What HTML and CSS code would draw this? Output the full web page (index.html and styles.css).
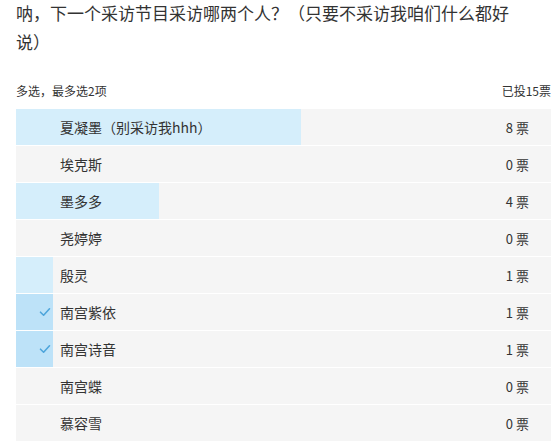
FILE: index.html
```html
<!DOCTYPE html>
<html lang="zh">
<head>
<meta charset="utf-8">
<link rel="stylesheet" href="styles.css">
</head>
<body>
<div class="poll">
  <div class="title">呐，下一个采访节目采访哪两个人？（只要不采访我咱们什么都好说）</div>
  <div class="meta">
    <span>多选，最多选2项</span>
    <span>已投15票</span>
  </div>
  <ul class="options">
    <li class="option"><span class="bar" style="width:53.33%"></span><span class="check"></span><span class="label">夏凝墨（别采访我hhh）</span><span class="count">8 票</span></li>
    <li class="option"><span class="bar" style="width:0%"></span><span class="check"></span><span class="label">埃克斯</span><span class="count">0 票</span></li>
    <li class="option"><span class="bar" style="width:26.67%"></span><span class="check"></span><span class="label">墨多多</span><span class="count">4 票</span></li>
    <li class="option"><span class="bar" style="width:0%"></span><span class="check"></span><span class="label">尧婷婷</span><span class="count">0 票</span></li>
    <li class="option"><span class="bar" style="width:7%"></span><span class="check"></span><span class="label">殷灵</span><span class="count">1 票</span></li>
    <li class="option checked"><span class="bar" style="width:7%"></span><span class="check"><svg viewBox="0 0 12 10" width="12" height="10"><path d="M1.5 5.2 L4.6 8.2 L10.5 1.8" fill="none" stroke="#4ea5db" stroke-width="1.6" stroke-linecap="round" stroke-linejoin="round"/></svg></span><span class="label">南宫紫依</span><span class="count">1 票</span></li>
    <li class="option checked"><span class="bar" style="width:7%"></span><span class="check"><svg viewBox="0 0 12 10" width="12" height="10"><path d="M1.5 5.2 L4.6 8.2 L10.5 1.8" fill="none" stroke="#4ea5db" stroke-width="1.6" stroke-linecap="round" stroke-linejoin="round"/></svg></span><span class="label">南宫诗音</span><span class="count">1 票</span></li>
    <li class="option"><span class="bar" style="width:0%"></span><span class="check"></span><span class="label">南宫蝶</span><span class="count">0 票</span></li>
    <li class="option"><span class="bar" style="width:0%"></span><span class="check"></span><span class="label">慕容雪</span><span class="count">0 票</span></li>
  </ul>
</div>
</body>
</html>
```
FILE: styles.css
```css
html, body {
  margin: 0;
  padding: 0;
  background: #ffffff;
}
body {
  font-family: "Noto Sans CJK SC", "Microsoft YaHei", sans-serif;
  color: #333333;
}
.poll {
  padding: 0 8px 0 16px;
}
.title {
  font-size: 17px;
  line-height: 29px;
  padding-right: 30px;
  margin-top: -2px;
  color: #333333;
}
.meta {
  display: flex;
  justify-content: space-between;
  font-size: 12px;
  line-height: 16px;
  margin-top: 27px;
  color: #333333;
}
.options {
  list-style: none;
  margin: 10px 0 0 0;
  padding: 0;
  display: flex;
  flex-direction: column;
  gap: 1px;
}
.option {
  position: relative;
  display: flex;
  align-items: center;
  height: 36px;
  background: #f5f5f5;
  font-size: 14px;
}
.bar {
  position: absolute;
  left: 0;
  top: 0;
  bottom: 0;
  background: #d5eefb;
}
.checked .bar {
  background: #bde2f8;
}
.check {
  position: relative;
  width: 44px;
  display: flex;
  justify-content: flex-end;
}
.check svg {
  display: block;
  margin-right: 9px;
}
.label {
  position: relative;
  flex: 1;
}
.count {
  position: relative;
  font-size: 13px;
  margin-right: 22px;
}
```
